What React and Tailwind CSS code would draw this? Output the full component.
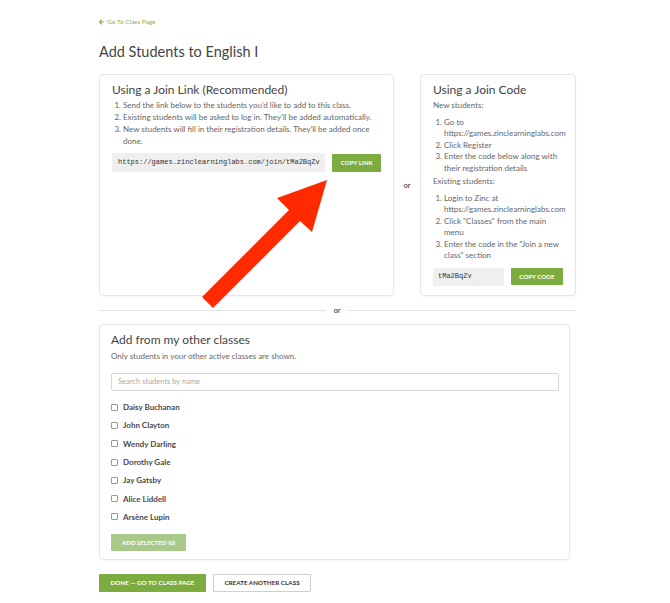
const students = [
  'Daisy Buchanan',
  'John Clayton',
  'Wendy Darling',
  'Dorothy Gale',
  'Jay Gatsby',
  'Alice Liddell',
  'Arsène Lupin',
];

function Arrow() {
  return (
    <svg
      className="absolute left-0 top-0 pointer-events-none"
      width="670"
      height="603"
      viewBox="0 0 670 603"
    >
      <polygon
        points="327,180 312,232 300,221 213,308 202,297 289,210 277,198"
        fill="#ff2a00"
      />
    </svg>
  );
}

function JoinLinkCard() {
  return (
    <div className="w-[295px] border border-[#e6e6e6] rounded-[4px] shadow-[0_1px_2px_rgba(0,0,0,0.04)] px-[12px] pt-[6px]">
      <h2 className="text-[12px] leading-[18px] text-[#444]">Using a Join Link (Recommended)</h2>
      <ol className="list-decimal pl-[11px] text-[8px] leading-[12px] text-[#666]">
        <li>Send the link below to the students you'd like to add to this class.</li>
        <li>Existing students will be asked to log in. They'll be added automatically.</li>
        <li>New students will fill in their registration details. They'll be added once done.</li>
      </ol>
      <div className="flex items-center gap-[7px] mt-[6px]">
        <div className="w-[215px] h-[19px] bg-[#efefef] rounded-[2px] flex items-center px-[6px] text-[7px] text-[#333] font-['Liberation_Mono',monospace] whitespace-nowrap overflow-hidden">
          https://games.zinclearninglabs.com/join/tMa2BqZv
        </div>
        <button className="w-[49px] h-[18px] bg-[#7cac3f] text-white text-[6.2px] font-bold rounded-[1px]">
          COPY LINK
        </button>
      </div>
    </div>
  );
}

function JoinCodeCard() {
  return (
    <div className="w-[156px] border border-[#e6e6e6] rounded-[4px] shadow-[0_1px_2px_rgba(0,0,0,0.04)] px-[12px] pt-[6px] pb-[9px] text-[8px] leading-[11.5px] text-[#666]">
      <h2 className="text-[12px] leading-[18px] text-[#444]">Using a Join Code</h2>
      <p className="mt-[1px]">New students:</p>
      <ol className="list-decimal pl-[11px] mt-[5px]">
        <li>Go to https://games.zinclearninglabs.com</li>
        <li>Click Register</li>
        <li>Enter the code below along with their registration details</li>
      </ol>
      <p className="mt-[2px]">Existing students:</p>
      <ol className="list-decimal pl-[11px] mt-[5px]">
        <li>Login to Zinc at https://games.zinclearninglabs.com</li>
        <li>Click "Classes" from the main menu</li>
        <li>Enter the code in the "Join a new class" section</li>
      </ol>
      <div className="flex items-center gap-[7px] mt-[6px]">
        <div className="w-[72px] h-[18px] bg-[#efefef] rounded-[2px] flex items-center px-[5px] text-[7px] text-[#333] font-['Liberation_Mono',monospace]">
          tMa2BqZv
        </div>
        <button className="w-[53px] h-[17px] bg-[#7cac3f] text-white text-[6.2px] font-bold rounded-[1px]">
          COPY CODE
        </button>
      </div>
    </div>
  );
}

function OtherClassesCard() {
  return (
    <div className="w-[471px] border border-[#e6e6e6] rounded-[4px] shadow-[0_1px_2px_rgba(0,0,0,0.04)] px-[11px] pt-[6px] pb-[8px]">
      <h2 className="text-[12px] leading-[18px] text-[#444]">Add from my other classes</h2>
      <p className="text-[8px] leading-[11px] text-[#666] mt-[2px]">
        Only students in your other active classes are shown.
      </p>
      <div className="mt-[11px] h-[18px] w-[448px] border border-[#d6d6d6] rounded-[2px] flex items-center px-[6px] text-[7.5px] text-[#aaa]">
        Search students by name
      </div>
      <div className="mt-[7px] flex flex-col">
        {students.map(function(name) {
          return (
            <div key={name} className="h-[18.3px] flex items-center gap-[5px]">
              <span className="w-[7px] h-[7px] border border-[#999] rounded-[1px] bg-white"></span>
              <span className="text-[8px] font-bold text-[#4a4a4a]">{name}</span>
            </div>
          );
        })}
      </div>
      <button className="mt-[8px] w-[75px] h-[17px] bg-[#a9c98a] text-white text-[6.2px] font-bold rounded-[1px]">
        ADD SELECTED (0)
      </button>
    </div>
  );
}

export default function App() {
  return (
    <div className="relative w-[670px] h-[603px] bg-white font-['Lato',sans-serif] overflow-hidden">
      <div className="pl-[99px] pt-[18px]">
        <a className="flex items-center gap-[2px] text-[6.5px] text-[#8bb04a] leading-[8px]">
          <svg width="6" height="6" viewBox="0 0 10 10">
            <path d="M5 1 L1 5 L5 9 M1 5 H9" stroke="#8bb04a" strokeWidth="2" fill="none" />
          </svg>
          Go To Class Page
        </a>
        <h1 className="text-[14.5px] leading-[22px] text-[#444] mt-[15px]">Add Students to English I</h1>

        <div className="flex mt-[11px] h-[222px]">
          <JoinLinkCard />
          <div className="w-[26px] flex items-center justify-center text-[7px] font-bold text-[#555]">or</div>
          <JoinCodeCard />
        </div>

        <div className="flex items-center w-[476px] mt-[9px] gap-[8px]">
          <div className="flex-1 h-px bg-[#e2e2e2]"></div>
          <span className="text-[7px] font-bold text-[#555] leading-[10px]">or</span>
          <div className="flex-1 h-px bg-[#e2e2e2]"></div>
        </div>

        <div className="mt-[9px]">
          <OtherClassesCard />
        </div>

        <div className="flex gap-[7px] mt-[14px]">
          <button className="w-[107px] h-[18px] bg-[#7cac3f] text-white text-[6.3px] font-bold rounded-[1px]">
            DONE — GO TO CLASS PAGE
          </button>
          <button className="w-[98px] h-[18px] bg-white border border-[#cfcfcf] text-[#333] text-[6.3px] font-bold rounded-[1px]">
            CREATE ANOTHER CLASS
          </button>
        </div>
      </div>
      <Arrow />
    </div>
  );
}
